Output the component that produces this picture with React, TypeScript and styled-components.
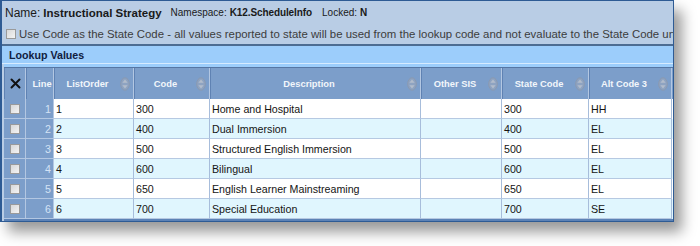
import React from "react";
import styled, { createGlobalStyle } from "styled-components";

const Global = createGlobalStyle`
  html, body { margin: 0; padding: 0; background: #ffffff; }
  body { font-family: "Liberation Sans", Arial, sans-serif; }
`;

const COLS = "22px 28px 80px 76px 211px 81px 87px 83px";

const Page = styled.div`
  padding: 0;
  width: 700px;
  height: 246px;
`;

const Panel = styled.div`
  width: 674px;
  height: 222px;
  box-sizing: border-box;
  background: #b9cde5;
  border: 1px solid #2e5b94;
  border-left-width: 2px;
  box-shadow: 8px 10px 13px rgba(0, 0, 0, 0.4);
  display: flex;
  flex-direction: column;
  overflow: hidden;
`;

const InfoRow = styled.div`
  height: 23px;
  display: flex;
  align-items: center;
  padding-left: 3px;
  white-space: nowrap;
  color: #1a1a1a;
`;

const Label = styled.span<{ $size: number; $gap?: number }>`
  font-size: ${(p) => p.$size}px;
  margin-left: ${(p) => p.$gap ?? 0}px;
`;

const Strong = styled.span<{ $size: number; $ls?: number }>`
  font-size: ${(p) => p.$size}px;
  font-weight: bold;
  letter-spacing: ${(p) => p.$ls ?? 0}px;
  margin-left: 3px;
`;

const CheckRow = styled.div`
  height: 20px;
  display: flex;
  align-items: center;
  padding-left: 4px;
  gap: 3px;
  white-space: nowrap;
  font-size: 11.4px;
  color: #3c3c3c;
`;

const Box = styled.span`
  display: inline-block;
  width: 10px;
  height: 10px;
  flex: none;
  box-sizing: border-box;
  border: 1px solid #9a9a9a;
  background: linear-gradient(135deg, #d8d8d8, #f4f4f4);
`;

const Separator = styled.div`
  height: 2px;
  background: #4d6c92;
`;

const SectionBar = styled.div`
  height: 17px;
  background: #9ccdfb;
  border-bottom: 1px solid #d6ebff;
  display: flex;
  align-items: center;
  padding-left: 7px;
  font-size: 10.67px;
  font-weight: bold;
  color: #102040;
`;

const Grid = styled.div`
  margin: 0 0 0 2px;
  border-top: 1px solid #9ccdfb;
  border-bottom: 2px solid #5c82b6;
  display: flex;
  flex-direction: column;
  padding-top: 2px;
  background: #9ccdfb;
`;

const HeaderRow = styled.div`
  display: grid;
  grid-template-columns: ${COLS};
  height: 31px;
  background: #7c9eca;
  border-top: 1px solid #5676a3;
`;

const HeadCell = styled.div<{ $center?: boolean }>`
  display: flex;
  align-items: center;
  box-sizing: border-box;
  border-right: 1px solid #b3c7e2;
  border-left: 1px solid #5f82b3;
  overflow: hidden;
  white-space: nowrap;
  font-size: 9.33px;
  font-weight: bold;
  color: #f2f6fb;
  justify-content: ${(p) => (p.$center ? "center" : "flex-start")};
`;

const HeadText = styled.span<{ $pad?: number }>`
  flex: 1;
  text-align: center;
  padding-left: ${(p) => p.$pad ?? 0}px;
`;

const SortIcon = styled.svg`
  flex: none;
  width: 10px;
  height: 14px;
  margin-right: 3px;
`;

const DataRow = styled.div<{ $alt: boolean }>`
  display: grid;
  grid-template-columns: ${COLS};
  height: 20px;
  background: ${(p) => (p.$alt ? "#e0f6fe" : "#ffffff")};
`;

const SideCell = styled.div<{ $right?: boolean }>`
  background: #7c9eca;
  box-sizing: border-box;
  border-right: 1px solid #b3c7e2;
  border-bottom: 1px solid #b3c7e2;
  display: flex;
  align-items: center;
  justify-content: ${(p) => (p.$right ? "flex-end" : "center")};
  padding-right: ${(p) => (p.$right ? 2 : 0)}px;
  font-size: 10.67px;
  color: #d4e3f6;
`;

const Cell = styled.div`
  box-sizing: border-box;
  border-right: 1px solid #a7bddb;
  border-bottom: 1px solid #b6c9e2;
  display: flex;
  align-items: center;
  padding-left: 2px;
  font-size: 10.67px;
  color: #141414;
  white-space: nowrap;
  overflow: hidden;
`;

const Sort = () => (
  <SortIcon viewBox="0 0 10 14">
    <ellipse cx="5" cy="7" rx="4.3" ry="6.2" fill="#8ea3c1" stroke="#8a99b0" strokeWidth="1" />
    <path d="M2.3 5.8 L5 2.6 L7.7 5.8 Z" fill="#b2bccb" />
    <path d="M2.3 8.2 L5 11.4 L7.7 8.2 Z" fill="#b2bccb" />
  </SortIcon>
);

const XIcon = () => (
  <svg width="11" height="11" viewBox="0 0 11 11">
    <path d="M1.5 1.5 L9.5 9.5 M9.5 1.5 L1.5 9.5" stroke="#111" strokeWidth="2" strokeLinecap="round" />
  </svg>
);

const rows = [
  { line: 1, order: "1", code: "300", desc: "Home and Hospital", other: "", state: "300", alt: "HH" },
  { line: 2, order: "2", code: "400", desc: "Dual Immersion", other: "", state: "400", alt: "EL" },
  { line: 3, order: "3", code: "500", desc: "Structured English Immersion", other: "", state: "500", alt: "EL" },
  { line: 4, order: "4", code: "600", desc: "Bilingual", other: "", state: "600", alt: "EL" },
  { line: 5, order: "5", code: "650", desc: "English Learner Mainstreaming", other: "", state: "650", alt: "EL" },
  { line: 6, order: "6", code: "700", desc: "Special Education", other: "", state: "700", alt: "SE" },
];

const headers = ["ListOrder", "Code", "Description", "Other SIS", "State Code", "Alt Code 3"];

export default function App() {
  return (
    <Page>
      <Global />
      <Panel>
        <InfoRow>
          <Label $size={12}>Name:</Label>
          <Strong $size={11.5}>Instructional Strategy</Strong>
          <Label $size={10} $gap={9}>Namespace:</Label>
          <Strong $size={10} $ls={-0.1}>K12.ScheduleInfo</Strong>
          <Label $size={10} $gap={10}>Locked:</Label>
          <Strong $size={10}>N</Strong>
        </InfoRow>
        <CheckRow>
          <Box />
          <span>
            Use Code as the State Code - all values reported to state will be used from the lookup code and not evaluate to the State Code un
          </span>
        </CheckRow>
        <Separator />
        <SectionBar>Lookup Values</SectionBar>
        <Grid>
          <HeaderRow>
            <HeadCell $center>
              <XIcon />
            </HeadCell>
            <HeadCell>
              <HeadText $pad={4}>Line</HeadText>
            </HeadCell>
            {headers.map((h) => (
              <HeadCell key={h}>
                <HeadText>{h}</HeadText>
                <Sort />
              </HeadCell>
            ))}
          </HeaderRow>
          {rows.map((r, i) => (
            <DataRow key={r.line} $alt={i % 2 === 1}>
              <SideCell>
                <Box />
              </SideCell>
              <SideCell $right>{r.line}</SideCell>
              <Cell>{r.order}</Cell>
              <Cell>{r.code}</Cell>
              <Cell>{r.desc}</Cell>
              <Cell>{r.other}</Cell>
              <Cell>{r.state}</Cell>
              <Cell>{r.alt}</Cell>
            </DataRow>
          ))}
        </Grid>
      </Panel>
    </Page>
  );
}
